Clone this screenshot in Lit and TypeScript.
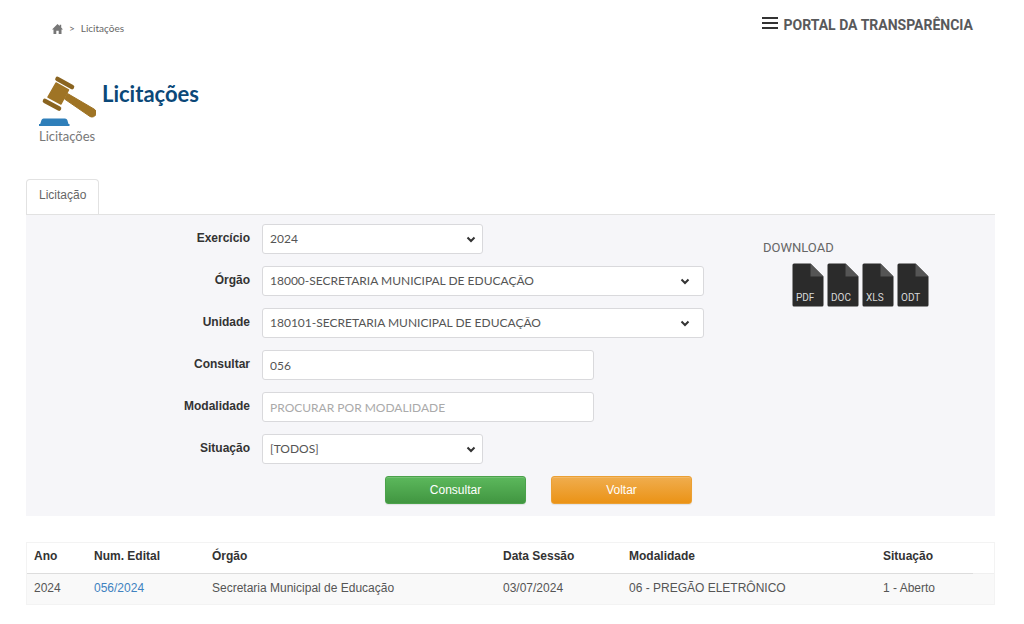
import { LitElement, html, css, svg, nothing } from "lit";
import { customElement, property } from "lit/decorators.js";

interface Tender {
  year: string;
  notice: string;
  agency: string;
  session: string;
  mode: string;
  status: string;
}

const tenders: Tender[] = [
  {
    year: "2024",
    notice: "056/2024",
    agency: "Secretaria Municipal de Educação",
    session: "03/07/2024",
    mode: "06 - PREGÃO ELETRÔNICO",
    status: "1 - Aberto",
  },
];

const formats = ["PDF", "DOC", "XLS", "ODT"];

const homeIcon = svg`<path d="M5.5 0 L0 5.4 H1.5 V10 H4.3 V6.8 H6.7 V10 H9.5 V5.4 H11 L9.2 3.6 V0.8 H7.7 V2.1 Z" fill="#777"/>`;

const gavelIcon = svg`
  <g stroke-linecap="round" fill="none">
    <path d="M18.500 9 L33 17" stroke="#8a6420" stroke-width="4.600"/>
    <path d="M6 31 L20 38.500" stroke="#8a6420" stroke-width="4.600"/>
  </g>
  <path d="M17 13 L29.500 20 L22 34 L9 27 Z" fill="#9f7425" stroke="#9f7425" stroke-width="1.500" stroke-linejoin="round"/>
  <path d="M28.500 23.500 L55 39 A3.900 3.900 0 0 1 51 46.500 L25.500 29 Z" fill="#9f7425" stroke="#9f7425" stroke-width="1" stroke-linejoin="round"/>
  <path d="M2.500 50 Q3 48.500 4.500 48.500 H26 Q27.800 48.500 28.300 50 L29.500 54 H30.500 V56 H0 V54 H1.200 Z" fill="#2f7fba"/>`;

@customElement("file-button")
export class FileButton extends LitElement {
  @property() format = "";

  static styles = css`
    :host { display: block; }
    .file {
      display: grid;
      width: 32px;
      height: 44px;
      padding: 0;
      border: 0;
      background: none;
      cursor: pointer;
    }
    .file > * { grid-area: 1 / 1; }
    .name {
      align-self: end;
      justify-self: start;
      padding: 0 0 3px 4px;
      font: 10px/12px Roboto, sans-serif;
      color: #d8d8d8;
    }
  `;

  render() {
    return html`<button class="file" type="button">
      <svg width="32" height="44" viewBox="0 0 32 44" aria-hidden="true">
        <path d="M1.500 0.500 H18.500 L31.500 13.500 V42 Q31.500 43.500 30 43.500 H2 Q0.500 43.500 0.500 42 V2 Q0.500 0.500 2 0.500 Z" fill="#2b2b2b"/>
        <path d="M18.500 0.500 L31.500 13.500 H18.500 Z" fill="#555"/>
      </svg>
      <span class="name">${this.format}</span>
    </button>`;
  }
}

@customElement("app-root")
export class AppRoot extends LitElement {
  static styles = css`
    :host {
      display: block;
      padding: 0 29px 20px 26px;
      background: #fff;
      color: #555;
      font: 12px/18px "Liberation Sans", Arial, sans-serif;
      --display: Lato, "Noto Sans", sans-serif;
      --caps: Roboto, "Noto Sans", sans-serif;
    }
    * { box-sizing: border-box; }
    .top {
      display: flex;
      justify-content: space-between;
      padding: 15px 22px 0 26px;
      font-family: var(--display);
    }
    .crumbs {
      display: flex;
      align-items: center;
      gap: 6px;
      padding-top: 6px;
      font-size: 10px;
      line-height: 14px;
      color: #666;
    }
    .crumbs a { color: inherit; text-decoration: none; }
    .crumbs svg { display: block; margin-top: 2px; }
    .menu {
      display: flex;
      align-items: center;
      gap: 6px;
      padding: 0;
      border: 0;
      background: none;
      color: #58595b;
      font: bold 14px/18px var(--caps);
      cursor: pointer;
    }
    .bars {
      display: grid;
      gap: 3px;
      width: 16px;
      padding-bottom: 4px;
    }
    .bars i { height: 2px; background: #333; }
    .heading {
      display: flex;
      gap: 6px;
      padding: 35px 0 0 13px;
      font-family: var(--display);
    }
    .emblem { display: block; width: 57px; margin: 0; }
    .emblem svg { display: block; }
    .emblem figcaption { font-size: 13px; line-height: 18px; color: #777; }
    h1 {
      margin: 10px 0 0;
      font-size: 22px;
      line-height: 28px;
      color: #0b4878;
    }
    .tabs {
      display: flex;
      margin-top: 34px;
      border-bottom: 1px solid #e2e2e2;
    }
    .tab {
      height: 35px;
      padding: 0 12px 4px;
      border: 1px solid #e2e2e2;
      border-bottom: 0;
      border-radius: 4px 4px 0 0;
      background: #fff;
      color: #666;
      font: inherit;
    }
    .panel {
      display: grid;
      grid-template-columns: minmax(0, 678fr) minmax(200px, 232fr);
      gap: 59px;
      padding: 9px 0 12px;
      background: #f6f6f9;
    }
    .fields { display: grid; gap: 12px; }
    .row {
      display: grid;
      grid-template-columns: minmax(0, 224fr) minmax(0, 442fr);
      gap: 12px;
    }
    label {
      padding-top: 5px;
      text-align: right;
      font-weight: bold;
      color: #333;
    }
    .control {
      width: 100%;
      height: 30px;
      padding: 0 7px;
      border: 1px solid #d9d9dc;
      border-radius: 3px;
      background-color: #fff;
      color: #555;
      font: 12px/18px var(--display);
      appearance: none;
    }
    .control::placeholder { color: #aaa; opacity: 1; }
    select.control {
      background-image: url("data:image/svg+xml,%3Csvg xmlns='http://www.w3.org/2000/svg' width='10' height='7'%3E%3Cpath d='M1.500 1.500 L5 5 L8.500 1.500' fill='none' stroke='%23333' stroke-width='2'/%3E%3C/svg%3E");
      background-repeat: no-repeat;
      background-position: right 6px center;
    }
    select.wide { background-position: right 13px center; }
    .short { width: 50%; }
    .medium { width: 75%; }
    .actions {
      display: flex;
      justify-content: flex-end;
      gap: 25px;
      padding-right: 12px;
    }
    .btn {
      width: 141px;
      height: 28px;
      padding: 0;
      border: 1px solid #4ba24b;
      border-radius: 3px;
      background: linear-gradient(#5cb85c, #419641);
      color: #fff;
      font: inherit;
      box-shadow: inset 0 1px 0 rgba(255, 255, 255, 0.15), 0 1px 1px rgba(0, 0, 0, 0.08);
    }
    .back { border-color: #eba034; background: linear-gradient(#f0ad4e, #eb9316); }
    .download { padding-top: 15px; }
    h2 {
      margin: 0 0 6px;
      font: 13px/18px var(--caps);
      color: #666;
    }
    .files { display: flex; gap: 3px; padding-left: 29px; }
    .results {
      width: 100%;
      margin-top: 26px;
      border: 1px solid #f3f3f3;
      border-spacing: 0;
      table-layout: fixed;
    }
    th, td { padding: 0 0 4px 7px; text-align: left; white-space: nowrap; }
    th { height: 31px; border-bottom: 1px solid #ddd; color: #333; }
    td { height: 30px; padding-bottom: 2px; background: #f9f9f9; }
    th.edge { border-bottom-color: #f0f0f0; }
    td a { color: #4082c0; text-decoration: none; }
    .c-year { width: 60px; }
    .c-notice { width: 118px; }
    .c-agency { width: 291px; }
    .c-session { width: 126px; }
    .c-mode { width: auto; }
    .c-status { width: 97px; }
    .c-edge { width: 21px; }
  `;

  private selectRow(id: string, label: string, size: string, value: string) {
    return html`<div class="row">
      <label for=${id}>${label}</label>
      <div><select id=${id} class="control ${size}"><option>${value}</option></select></div>
    </div>`;
  }

  private inputRow(id: string, label: string, value: string, placeholder?: string) {
    return html`<div class="row">
      <label for=${id}>${label}</label>
      <div><input id=${id} class="control medium" type="text" .value=${value} placeholder=${placeholder ?? nothing}></div>
    </div>`;
  }

  render() {
    return html`
      <header class="top">
        <nav class="crumbs" aria-label="Breadcrumb">
          <a href="#"><svg width="11" height="10" viewBox="0 0 11 10" aria-hidden="true">${homeIcon}</svg></a>
          <span>&gt;</span>
          <a href="#">Licitações</a>
        </nav>
        <button class="menu" type="button">
          <span class="bars"><i></i><i></i><i></i></span>PORTAL DA TRANSPARÊNCIA
        </button>
      </header>

      <div class="heading">
        <figure class="emblem">
          <svg width="57" height="57" viewBox="0 0 57 57" aria-hidden="true">${gavelIcon}</svg>
          <figcaption>Licitações</figcaption>
        </figure>
        <h1>Licitações</h1>
      </div>

      <div class="tabs" role="tablist">
        <button class="tab" role="tab" aria-selected="true" type="button">Licitação</button>
      </div>
      <section class="panel">
        <form class="fields" @submit=${(e: Event) => e.preventDefault()}>
          ${this.selectRow("year", "Exercício", "short", "2024")}
          ${this.selectRow("agency", "Órgão", "wide", "18000-SECRETARIA MUNICIPAL DE EDUCAÇÃO")}
          ${this.selectRow("unit", "Unidade", "wide", "180101-SECRETARIA MUNICIPAL DE EDUCAÇÃO")}
          ${this.inputRow("query", "Consultar", "056")}
          ${this.inputRow("mode", "Modalidade", "", "PROCURAR POR MODALIDADE")}
          ${this.selectRow("status", "Situação", "short", "[TODOS]")}
          <div class="actions">
            <button class="btn" type="submit">Consultar</button>
            <button class="btn back" type="button">Voltar</button>
          </div>
        </form>
        <aside class="download">
          <h2>DOWNLOAD</h2>
          <div class="files">
            ${formats.map((f) => html`<file-button format=${f}></file-button>`)}
          </div>
        </aside>
      </section>

      <table class="results">
        <thead>
          <tr>
            <th class="c-year">Ano</th>
            <th class="c-notice">Num. Edital</th>
            <th class="c-agency">Órgão</th>
            <th class="c-session">Data Sessão</th>
            <th class="c-mode">Modalidade</th>
            <th class="c-status">Situação</th>
            <th class="c-edge edge"></th>
          </tr>
        </thead>
        <tbody>
          ${tenders.map(
            (t) => html`<tr>
              <td>${t.year}</td>
              <td><a href="#">${t.notice}</a></td>
              <td>${t.agency}</td>
              <td>${t.session}</td>
              <td>${t.mode}</td>
              <td>${t.status}</td>
              <td></td>
            </tr>`
          )}
        </tbody>
      </table>
    `;
  }
}
